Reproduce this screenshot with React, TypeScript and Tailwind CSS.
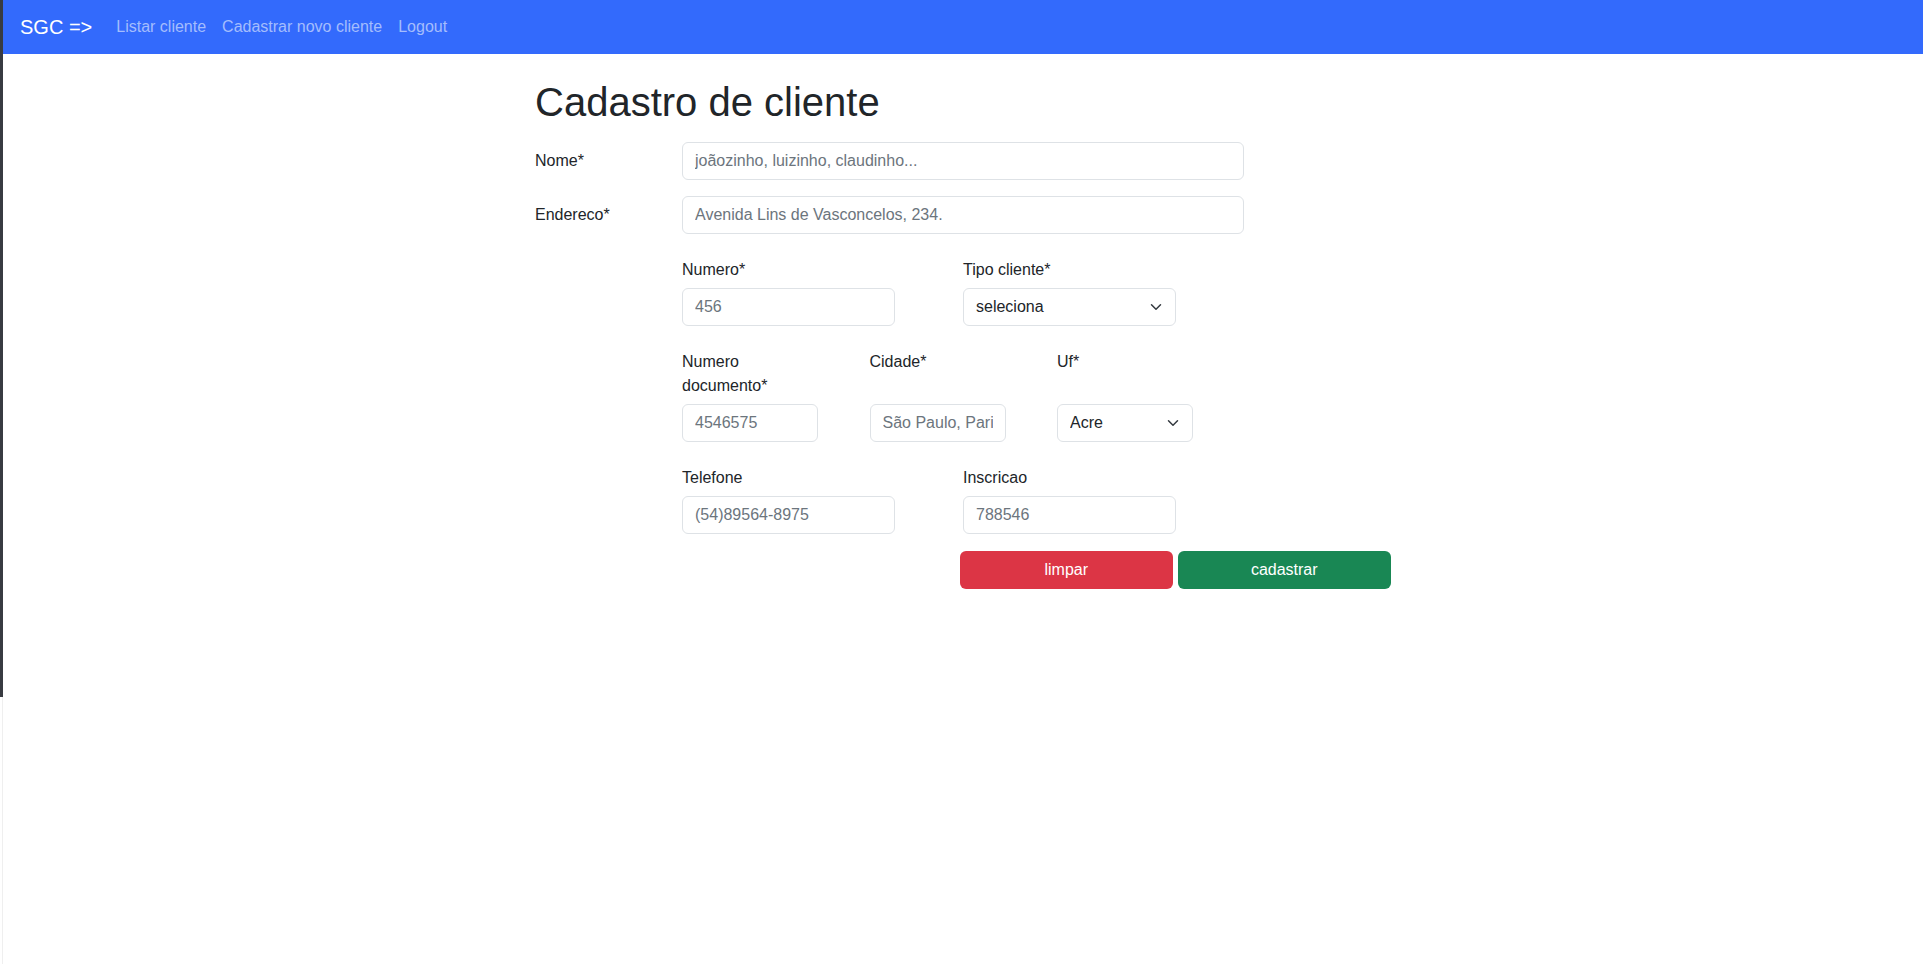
import { useState } from 'react';

const inputCls =
  'block h-[38px] w-full rounded-[6px] border border-[#dee2e6] bg-white px-3 text-[16px] leading-6 text-[#212529] placeholder:text-[#6c757d] focus:outline-none';

function Chevron() {
  return (
    <svg
      className="pointer-events-none absolute right-3 top-1/2 -translate-y-1/2"
      width="16"
      height="12"
      viewBox="0 0 16 16"
      fill="none"
    >
      <path d="m2 5 6 6 6-6" stroke="#343a40" strokeWidth="2" strokeLinecap="round" strokeLinejoin="round" />
    </svg>
  );
}

function Field({ label, children }: { label: string; children: React.ReactNode }) {
  return (
    <div className="flex flex-col">
      <label className="mb-[6px] text-[16px] leading-6 text-[#212529]">{label}</label>
      <div className="mt-auto">{children}</div>
    </div>
  );
}

export default function App() {
  const [form, setForm] = useState({
    nome: '',
    endereco: '',
    numero: '',
    tipo: 'seleciona',
    documento: '',
    cidade: '',
    uf: 'Acre',
    telefone: '',
    inscricao: '',
  });

  const handleChange = (e: React.ChangeEvent<HTMLInputElement | HTMLSelectElement>) => {
    setForm((prev) => ({ ...prev, [e.target.name]: e.target.value }));
  };

  return (
    <div
      className="flex min-h-[964px] bg-white"
      style={{ fontFamily: '"Liberation Sans", Arial, sans-serif' }}
    >
      <div className="flex w-[3px] flex-col">
        <div className="h-[697px] bg-[#383b41]" />
        <div className="flex-1 border-r border-[#efefef]" />
      </div>

      <div className="flex-1">
        <nav className="flex h-[54px] items-center bg-[#336afc] pl-[17px]">
          <span className="mr-4 text-[20px] leading-[30px] text-white">SGC =&gt;</span>
          <ul className="flex">
            {['Listar cliente', 'Cadastrar novo cliente', 'Logout'].map((l) => (
              <li key={l}>
                <a href="#" className="block px-2 text-[16px] leading-6 text-[#a4bdfd]">
                  {l}
                </a>
              </li>
            ))}
          </ul>
        </nav>

        <div className="mx-auto w-[856px]">
          <h1 className="mt-6 mb-4 text-[40px] font-medium leading-[48px] text-[#212529]">
            Cadastro de cliente
          </h1>

          <form onSubmit={(e) => e.preventDefault()}>
            <div className="flex items-center">
              <label className="w-[147px] text-[16px] leading-6 text-[#212529]">Nome*</label>
              <div className="w-[562px]">
                <input
                  name="nome"
                  value={form.nome}
                  onChange={handleChange}
                  placeholder="joãozinho, luizinho, claudinho..."
                  className={inputCls}
                />
              </div>
            </div>
            <div className="mt-4 flex items-center">
              <label className="w-[147px] text-[16px] leading-6 text-[#212529]">Endereco*</label>
              <div className="w-[562px]">
                <input
                  name="endereco"
                  value={form.endereco}
                  onChange={handleChange}
                  placeholder="Avenida Lins de Vasconcelos, 234."
                  className={inputCls}
                />
              </div>
            </div>

            <div className="ml-[147px]">
              <div className="mt-6 grid grid-cols-[213px_213px] gap-x-[68px]">
                <Field label="Numero*">
                  <input name="numero" value={form.numero} onChange={handleChange} placeholder="456" className={inputCls} />
                </Field>
                <Field label="Tipo cliente*">
                  <div className="relative">
                    <select
                      name="tipo"
                      value={form.tipo}
                      onChange={handleChange}
                      className={inputCls + ' appearance-none pr-9'}
                    >
                      <option value="seleciona">seleciona</option>
                      <option value="fisica">Pessoa física</option>
                      <option value="juridica">Pessoa jurídica</option>
                    </select>
                    <Chevron />
                  </div>
                </Field>
              </div>

              <div className="mt-6 grid grid-cols-[136px_136px_136px] gap-x-[51.5px]">
                <Field label="Numero documento*">
                  <input
                    name="documento"
                    value={form.documento}
                    onChange={handleChange}
                    placeholder="4546575"
                    className={inputCls}
                  />
                </Field>
                <Field label="Cidade*">
                  <input
                    name="cidade"
                    value={form.cidade}
                    onChange={handleChange}
                    placeholder="São Paulo, Parintins..."
                    className={inputCls}
                  />
                </Field>
                <Field label="Uf*">
                  <div className="relative">
                    <select
                      name="uf"
                      value={form.uf}
                      onChange={handleChange}
                      className={inputCls + ' appearance-none pr-9'}
                    >
                      <option>Acre</option>
                      <option>Alagoas</option>
                      <option>Amapá</option>
                      <option>Amazonas</option>
                      <option>Bahia</option>
                      <option>São Paulo</option>
                    </select>
                    <Chevron />
                  </div>
                </Field>
              </div>

              <div className="mt-6 grid grid-cols-[213px_213px] gap-x-[68px]">
                <Field label="Telefone">
                  <input
                    name="telefone"
                    value={form.telefone}
                    onChange={handleChange}
                    placeholder="(54)89564-8975"
                    className={inputCls}
                  />
                </Field>
                <Field label="Inscricao">
                  <input
                    name="inscricao"
                    value={form.inscricao}
                    onChange={handleChange}
                    placeholder="788546"
                    className={inputCls}
                  />
                </Field>
              </div>
            </div>

            <div className="mt-[17px] flex justify-end gap-[4.5px]">
              <button
                type="button"
                onClick={() =>
                  setForm({
                    nome: '',
                    endereco: '',
                    numero: '',
                    tipo: 'seleciona',
                    documento: '',
                    cidade: '',
                    uf: 'Acre',
                    telefone: '',
                    inscricao: '',
                  })
                }
                className="h-[38px] w-[213.5px] rounded-[6px] bg-[#dc3545] text-[16px] text-white"
              >
                limpar
              </button>
              <button type="submit" className="h-[38px] w-[213.5px] rounded-[6px] bg-[#198754] text-[16px] text-white">
                cadastrar
              </button>
            </div>
          </form>
        </div>
      </div>
    </div>
  );
}
